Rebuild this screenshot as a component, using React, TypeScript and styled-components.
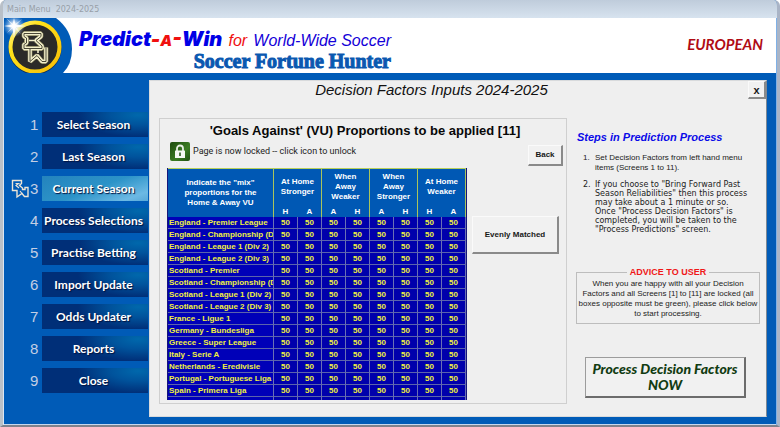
import React from "react";
import styled, { createGlobalStyle } from "styled-components";

const sans = `"Liberation Sans", Arial, sans-serif`;
const humanist = `Lato, "Open Sans", sans-serif`;

const GlobalStyle = createGlobalStyle`
  * { box-sizing: border-box; }
  body { margin: 0; background: #fff; font-family: ${sans}; }
  button { font-family: inherit; cursor: pointer; }
`;

const Window = styled.div`
  min-height: 100vh;
  display: flex;
  flex-direction: column;
  background: #005bb7;
  border-style: solid;
  border-color: #b4bac2 #a9b4c6 #7f828c #b9c0c8;
  border-width: 0 3px 2px 3px;
  border-radius: 6px 6px 0 0;
  box-shadow: inset 1px 0 #dce6f2, inset -1px 0 #7fb0e6, inset 0 -1px #c5d8ee;
  overflow: hidden;
`;

const TitleBar = styled.header`
  height: 18px;
  padding: 2px 4px 0;
  display: flex;
  align-items: center;
  background: linear-gradient(#bfccdb, #d7e3ef);
  color: #98a0a8;
  font: 8px/16px "DejaVu Sans", Verdana, sans-serif;
  white-space: pre;
`;

const Banner = styled.div`
  height: 55px;
  margin: 0 1px;
  display: flex;
  background: #fff;
`;

const Brand = styled.div`
  width: 312px;
  margin: 8px auto 0 7px;
  display: flex;
  flex-direction: column;
`;

const Slogan = styled.h1`
  margin: 0;
  display: flex;
  align-items: baseline;
  justify-content: space-between;
  white-space: nowrap;
  font: italic 16px/26px ${sans};
  color: #1400d8;
`;

const SloganName = styled.span`
  font: italic 900 20px/26px Inter, ${sans};
  color: #0000e6;
`;

const Red = styled.span<{ $small?: boolean }>`
  color: #f01010;
  font-size: ${(p) => (p.$small ? "15px" : "inherit")};
`;

const Product = styled.p`
  margin: 0;
  text-align: right;
  white-space: nowrap;
  font: bold 20px/14px "Liberation Serif", serif;
  color: #0a58b0;
  -webkit-text-stroke: 1px #0a58b0;
`;

const Region = styled.span`
  margin: 16px 13px 0 0;
  font: italic bold 15px/20px ${humanist};
  color: #b00c14;
`;

const Body = styled.main`
  flex: 1;
  display: flex;
  padding: 7px 10px 8px 1px;
`;

const Menu = styled.nav`
  width: 145px;
  flex: none;
  padding-top: 32px;
  display: flex;
  flex-direction: column;
  gap: 8px;
`;

const MenuRow = styled.div`
  display: grid;
  grid-template-columns: 26px 12px 106px;
  align-items: center;
  height: 24px;
`;

const MenuMark = styled.span`
  display: flex;
  justify-content: flex-end;
`;

const MenuNumber = styled.span`
  grid-column: 2;
  grid-row: 1;
  font: 15px/24px ${sans};
  color: #c4cfe4;
`;

const MenuButton = styled.button<{ $active?: boolean }>`
  grid-column: 3;
  height: 25px;
  border: 0;
  padding: 0 3px 0 0;
  white-space: nowrap;
  color: #fff;
  font: bold 12px/20px ${humanist};
  text-shadow: 1px 1px 1px #00133f;
  background: ${(p) =>
    p.$active
      ? "linear-gradient(160deg, #2483bd 0%, #2c93c8 50%, #6cb9e4 85%, #58a8d8 100%)"
      : "radial-gradient(ellipse 60px 22px at 96px 3px, #0068ac 0%, #00539c 45%, #002f78 100%)"};
`;

const Panel = styled.section`
  flex: 1;
  min-width: 0;
  padding: 0 6px 12px 9px;
  background: #efefef;
  border: 1px solid #d8dadc;
  border-right-color: #7c8894;
`;

const PanelHead = styled.div`
  display: grid;
  grid-template-columns: 1fr auto;
  align-items: start;
  height: 37px;
`;

const PanelTitle = styled.h2`
  margin: 0;
  padding-right: 56px;
  text-align: center;
  grid-column: 1 / 3;
  grid-row: 1;
  font: italic 15px/18px ${sans};
  color: #111;
`;

const RaisedButton = styled.button<{ $w: number; $h: number }>`
  width: ${(p) => p.$w}px;
  height: ${(p) => p.$h}px;
  padding: 0;
  background: #f1f1f1;
  border-style: solid;
  border-width: 1px 2px 2px 1px;
  border-color: #fafafa #8a8a8a #8a8a8a #fafafa;
  font: bold 8px/12px ${sans};
  color: #181818;
`;

const CloseButton = styled(RaisedButton)`
  grid-column: 2;
  grid-row: 1;
  margin-right: -6px;
  font-size: 11px;
`;

const Columns = styled.div`
  display: flex;
  gap: 9px;
  align-items: flex-start;
`;

const Inputs = styled.div`
  flex: 1;
  min-width: 0;
  padding: 3px 3px 3px 7px;
  border: 1px solid #cfcfcf;
`;

const InputsTitle = styled.h3`
  margin: 0;
  text-align: center;
  white-space: nowrap;
  font: bold 13px/18px ${sans};
  color: #080808;
`;

const InputsGrid = styled.div`
  display: grid;
  grid-template-columns: 300px 1fr;
  grid-template-rows: 28px auto;
  column-gap: 5px;
`;

const LockLine = styled.div`
  display: flex;
  align-items: center;
  gap: 3px;
  padding: 0 0 6px 3px;
  font: 9px/20px Roboto, ${sans};
  color: #222;
`;

const LockButton = styled.button`
  width: 20px;
  height: 19px;
  padding: 0;
  border: 0;
  border-radius: 2px;
  background: linear-gradient(135deg, #1d4a0d, #3b7c22 60%, #1f5010);
  display: flex;
  justify-content: center;
  align-items: center;
`;

const Side = styled.div`
  display: flex;
  flex-direction: column;
  padding-top: 48px;
`;

const BackCell = styled.div`
  display: flex;
  justify-content: flex-end;
  padding-top: 5px;
`;

const TableBox = styled.div`
  height: 232px;
  overflow: hidden;
  border-left: 1px solid #15157a;
  border-right: 1px solid #15157a;
`;

const Table = styled.table`
  width: 100%;
  table-layout: fixed;
  border-collapse: separate;
  border-spacing: 0;
  font: bold 8px/11px ${sans};
`;

const GroupHead = styled.th<{ $first?: boolean }>`
  height: ${(p) => (p.$first ? 49 : 37)}px;
  padding: 0;
  vertical-align: middle;
  background: #0058b4;
  color: #fff;
  font: bold 8px/10px ${sans};
  border-top: 1px solid #b7cf5c;
  border-right: 1px solid #a9c45c;
`;

const LetterHead = styled.th<{ $end?: boolean }>`
  height: 12px;
  padding: 0;
  background: #0058b4;
  color: #fff;
  border-right: 1px solid ${(p) => (p.$end ? "#a9c45c" : "#0058b4")};
`;

const League = styled.th`
  height: 12px;
  padding: 0 0 0 1px;
  text-align: left;
  white-space: nowrap;
  overflow: hidden;
  background: #0000b8;
  color: #f0f040;
  border-right: 1px solid #6a70b4;
  border-bottom: 1px solid #5c64ac;
`;

const Value = styled.td`
  height: 12px;
  padding: 0;
  text-align: center;
  background: #0000ac;
  color: #f0f040;
  border-right: 1px solid #6a70b4;
  border-bottom: 1px solid #5c64ac;
`;

const Guide = styled.aside`
  width: 184px;
  flex: none;
  display: flex;
  flex-direction: column;
  padding-top: 11px;
`;

const GuideTitle = styled.h3`
  margin: 0 0 8px 1px;
  font: italic bold 11px/16px ${sans};
  color: #0a0ae8;
  white-space: nowrap;
`;

const Steps = styled.ol`
  margin: 0;
  padding: 0 0 0 18px;
  list-style: none;
  counter-reset: step;
  display: flex;
  flex-direction: column;
  gap: 7px;
  color: #222;
`;

const Step = styled.li<{ $wide?: boolean }>`
  counter-increment: step;
  display: flex;
  margin-left: -11px;
  white-space: pre-line;
  font: ${(p) => (p.$wide ? `8px/9px "DejaVu Sans", Verdana, sans-serif` : `8px/10px ${sans}`)};
  &::before {
    content: counter(step) ".";
    flex: none;
    width: 12px;
  }
`;

const Advice = styled.fieldset`
  margin: 33px 0 0;
  padding: 1px 0 4px;
  border: 1px solid #bdbdbd;
  text-align: center;
  white-space: pre-line;
  font: 8px/10px ${sans};
  color: #222;
`;

const AdviceTitle = styled.legend`
  padding: 0 3px;
  margin: 0 auto;
  font: bold 9px/11px ${sans};
  color: #f01818;
`;

const ProcessButton = styled.button`
  width: 161px;
  height: 41px;
  margin: 33px 0 0 9px;
  padding: 0;
  background: #f1f1f1;
  border-style: solid;
  border-width: 1px 2px 2px 1px;
  border-color: #9c9c9c #6c6c6c #6c6c6c #9c9c9c;
  color: #123c12;
  font: italic 900 14px/16px ${humanist};
  white-space: pre-line;
`;

const LogoArt = styled.svg`
  flex: none;
  display: block;
`;

const MONOGRAM =
  "M20 15.500H37V18.500L32 22.500L38 28V30.500H20V26.500L22.500 25V20L20 18.500Z M26 31V43.500L33 37.500L38 43.500H42V29.500";

const Logo = () => (
  <LogoArt width="68" height="55" viewBox="0 0 68 55" role="img" aria-label="BW">
    <defs>
      <radialGradient id="spark">
        <stop offset="0" stopColor="#fff" />
        <stop offset="0.3" stopColor="#fff" stopOpacity="0.8" />
        <stop offset="1" stopColor="#8fc0ff" stopOpacity="0" />
      </radialGradient>
      <linearGradient id="ring" x1="0" y1="0" x2="1" y2="1">
        <stop offset="0" stopColor="#fff3a0" />
        <stop offset="0.3" stopColor="#ffe21a" />
        <stop offset="1" stopColor="#f6bd08" />
      </linearGradient>
    </defs>
    <path d="M0 0H52Q68 12 68 31Q68 46 59 55H0Z" fill="#005bb7" />
    <circle cx="31" cy="30" r="26.500" fill="#0a2c5c" />
    <circle cx="31" cy="29" r="24.500" fill="#2b2a28" stroke="url(#ring)" strokeWidth="4" />
    <g fill="none" strokeLinejoin="bevel">
      <path d={MONOGRAM} stroke="#85805a" strokeWidth="4.800" />
      <path d={MONOGRAM} stroke="#f4f0cd" strokeWidth="3.600" />
      <path d={MONOGRAM} stroke="#4a4836" strokeWidth="1" />
      <path d="M25 22.500H32" stroke="#f4f0cd" strokeWidth="1.600" />
      <path d="M34 31V35" stroke="#f4f0cd" strokeWidth="1.600" />
    </g>
    <circle cx="10" cy="8" r="11" fill="url(#spark)" />
    <path d="M10 0L11.500 6.500L22 8L11.500 9.500L10 20L8.500 9.500L0 8L8.500 6.500Z" fill="#fff" opacity="0.9" />
    <path d="M2 0L10 7L18 1L11 8L17 16L10 9L3 15L9 8Z" fill="#fff" opacity="0.7" />
  </LogoArt>
);

const MARK_BODY = "M1.500 1.500H10.500V4.500L8.500 6.500L11.500 9V10.500H14V8.500H17V17.500H13.500L11 14.500L6 18V11.500H1.500Z";

const Marker = () => (
  <svg width="19" height="20" viewBox="0 0 19 20" fill="none" stroke="#ece4d6" strokeWidth="1.400" aria-hidden="true">
    <path d={MARK_BODY} />
    <path d="M4.500 4.500H7.500L5 6.500L8 9M9 12L11 14.500" strokeWidth="1.200" />
  </svg>
);

const Padlock = () => (
  <svg width="12" height="15" viewBox="0 0 12 15" aria-hidden="true">
    <path d="M3 7V4.500a3 3 0 0 1 6 0V7" fill="none" stroke="#e8efe4" strokeWidth="1.800" />
    <rect x="1" y="6.500" width="10" height="7.500" rx="0.500" fill="#f5f8f2" />
    <path d="M6 8.500v3.500" stroke="#2b5a1c" strokeWidth="1.600" />
  </svg>
);

const menu = [
  "Select Season",
  "Last Season",
  "Current Season",
  "Process Selections",
  "Practise Betting",
  "Import Update",
  "Odds Updater",
  "Reports",
  "Close",
];

const groups = [
  { lines: ["At Home", "Stronger"], letters: ["H", "A"] },
  { lines: ["When", "Away", "Weaker"], letters: ["A", "H"] },
  { lines: ["When", "Away", "Stronger"], letters: ["A", "H"] },
  { lines: ["At Home", "Weaker"], letters: ["H", "A"] },
];

const leagues = [
  "England - Premier League",
  "England - Championship (Div 1)",
  "England - League 1 (Div 2)",
  "England - League 2 (Div 3)",
  "Scotland - Premier",
  "Scotland - Championship (Div 1)",
  "Scotland - League 1 (Div 2)",
  "Scotland - League 2 (Div 3)",
  "France - Ligue 1",
  "Germany - Bundesliga",
  "Greece - Super League",
  "Italy - Serie A",
  "Netherlands - Eredivisie",
  "Portugal - Portuguese Liga",
  "Spain - Primera Liga",
  "Turkey - Super Liga",
];

const stack = (lines: string[]) =>
  lines.map((line, i) => (
    <React.Fragment key={line}>
      {i > 0 && <br />}
      {line}
    </React.Fragment>
  ));

const Proportions = () => (
  <TableBox>
    <Table>
      <colgroup>
        <col />
        {Array.from({ length: 8 }, (_, i) => (
          <col key={i} width="24" />
        ))}
      </colgroup>
      <thead>
        <tr>
          <GroupHead rowSpan={2} $first scope="col">
            {stack(['Indicate the "mix"', "proportions for the", "Home & Away VU"])}
          </GroupHead>
          {groups.map((g, i) => (
            <GroupHead key={i} colSpan={2} scope="colgroup">
              {stack(g.lines)}
            </GroupHead>
          ))}
        </tr>
        <tr>
          {groups.flatMap((g, i) =>
            g.letters.map((letter, j) => (
              <LetterHead key={`${i}-${j}`} $end={j === 1} scope="col">
                {letter}
              </LetterHead>
            ))
          )}
        </tr>
      </thead>
      <tbody>
        {leagues.map((league) => (
          <tr key={league}>
            <League scope="row">{league}</League>
            {Array.from({ length: 8 }, (_, i) => (
              <Value key={i}>50</Value>
            ))}
          </tr>
        ))}
      </tbody>
    </Table>
  </TableBox>
);

export default function App() {
  return (
    <>
      <GlobalStyle />
      <Window>
        <TitleBar>{"Main Menu  2024-2025"}</TitleBar>
        <Banner>
          <Logo />
          <Brand>
            <Slogan>
              <SloganName>
                Predict<Red>-</Red>
                <Red $small>A</Red>
                <Red>-</Red>Win
              </SloganName>
              <Red>for</Red>
              <span>World-Wide Soccer</span>
            </Slogan>
            <Product>Soccer Fortune Hunter</Product>
          </Brand>
          <Region>EUROPEAN</Region>
        </Banner>
        <Body>
          <Menu>
            {menu.map((label, i) => (
              <MenuRow key={label}>
                {i === 2 && (
                  <MenuMark>
                    <Marker />
                  </MenuMark>
                )}
                <MenuNumber>{i + 1}</MenuNumber>
                <MenuButton $active={i === 2}>{label}</MenuButton>
              </MenuRow>
            ))}
          </Menu>
          <Panel>
            <PanelHead>
              <PanelTitle>Decision Factors Inputs 2024-2025</PanelTitle>
              <CloseButton $w={18} $h={18} aria-label="Close panel">
                x
              </CloseButton>
            </PanelHead>
            <Columns>
              <Inputs>
                <InputsTitle>'Goals Against' (VU) Proportions to be applied [11]</InputsTitle>
                <InputsGrid>
                  <LockLine>
                    <LockButton aria-label="Unlock page">
                      <Padlock />
                    </LockButton>
                    Page is now locked -- click icon to unlock
                  </LockLine>
                  <BackCell>
                    <RaisedButton $w={35} $h={21}>
                      Back
                    </RaisedButton>
                  </BackCell>
                  <Proportions />
                  <Side>
                    <RaisedButton $w={87} $h={38}>
                      Evenly Matched
                    </RaisedButton>
                  </Side>
                </InputsGrid>
              </Inputs>
              <Guide>
                <GuideTitle>Steps in Prediction Process</GuideTitle>
                <Steps>
                  <Step>{"Set Decision Factors from left hand menu\nitems (Screens 1 to 11)."}</Step>
                  <Step $wide>
                    {
                      'If you choose to "Bring Forward Past\nSeason Reliabilities" then this process\nmay take about a 1 minute or so.\nOnce "Process Decision Factors" is\ncompleted, you will be taken to the\n"Process Predictions" screen.'
                    }
                  </Step>
                </Steps>
                <Advice>
                  <AdviceTitle>ADVICE TO USER</AdviceTitle>
                  {
                    "When you are happy with all your Decision\nFactors and all Screens [1] to [11] are locked (all\nboxes opposite must be green), please click below\nto start processing."
                  }
                </Advice>
                <ProcessButton>{"Process Decision Factors\nNOW"}</ProcessButton>
              </Guide>
            </Columns>
          </Panel>
        </Body>
      </Window>
    </>
  );
}
